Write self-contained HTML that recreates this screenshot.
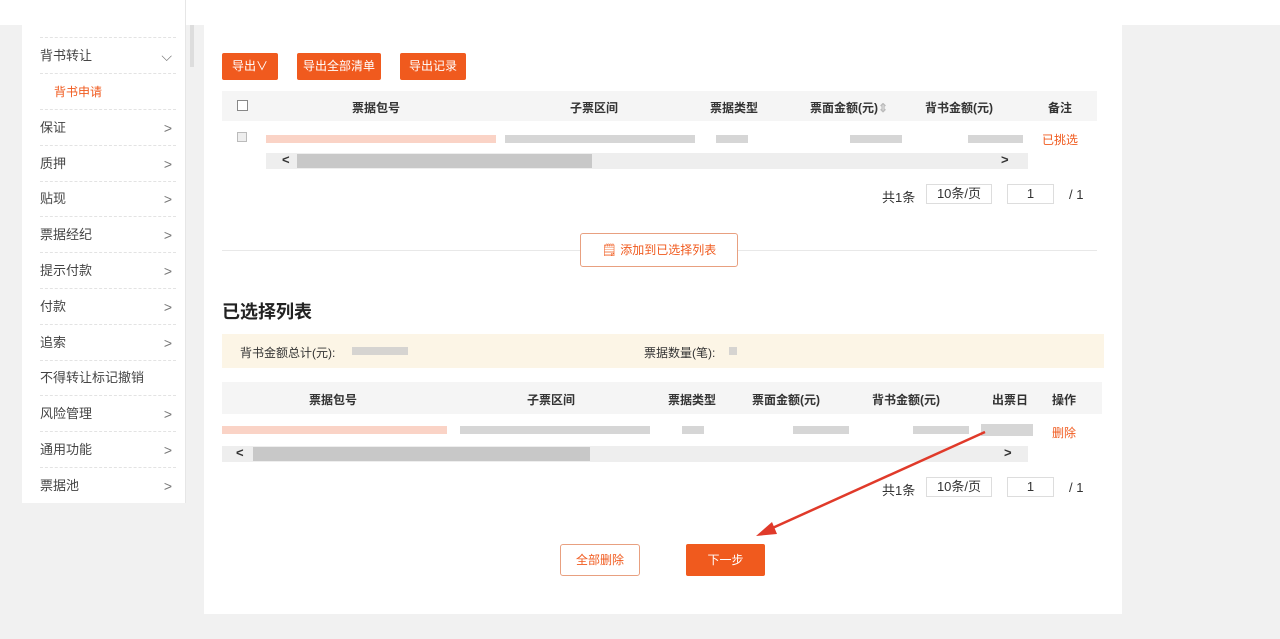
<!DOCTYPE html>
<html><head><meta charset="utf-8"><style>
*{margin:0;padding:0;box-sizing:border-box}
body{width:1280px;height:639px;background:#f1f1f1;font-family:"Liberation Sans","Noto Sans CJK SC",sans-serif;font-size:13px;color:#333;position:relative;overflow:hidden}
.a{position:absolute}
.side{left:22px;top:0;width:164px;height:503px;background:#fff;border-right:1px solid #e6e6e6}
.it{position:absolute;left:18px;width:136px;height:36px;line-height:36px;border-bottom:1px dashed #e3e3e3;font-size:13px;color:#444}
.it span{position:absolute;right:4px;color:#777;font-size:14px}
.main{left:204px;top:0;width:918px;height:614px;background:#fff}
.btn{position:absolute;background:#f05a1e;color:#fff;font-size:12px;text-align:center;line-height:27px;border-radius:2px;height:27px}
.th{position:absolute;font-weight:bold;font-size:12px;color:#333}
.blur{position:absolute;height:8px;background:#ccc;opacity:.8}
.pg{position:absolute;font-size:13px;color:#333}
.box{position:absolute;border:1px solid #ddd;height:20px;line-height:18px;text-align:center;font-size:13px}
</style></head><body>
<div class="a" style="left:0;top:0;width:1280px;height:25px;background:#fff"></div>
<div class="a side">
<div class="it" style="top:2px;height:36px"></div>
<div class="it" style="top:38px">背书转让<span>⌵</span></div>
<div class="it" style="top:74px;padding-left:14px;color:#f05a1e;font-size:12px">背书申请</div>
<div class="it" style="top:110px">保证<span>&gt;</span></div>
<div class="it" style="top:146px">质押<span>&gt;</span></div>
<div class="it" style="top:181px">贴现<span>&gt;</span></div>
<div class="it" style="top:217px">票据经纪<span>&gt;</span></div>
<div class="it" style="top:253px">提示付款<span>&gt;</span></div>
<div class="it" style="top:289px">付款<span>&gt;</span></div>
<div class="it" style="top:325px">追索<span>&gt;</span></div>
<div class="it" style="top:360px">不得转让标记撤销</div>
<div class="it" style="top:396px">风险管理<span>&gt;</span></div>
<div class="it" style="top:432px">通用功能<span>&gt;</span></div>
<div class="it" style="top:468px;border:none">票据池<span>&gt;</span></div>
</div>
<div class="a main"></div>
<div class="a" style="left:190px;top:25px;width:4px;height:42px;background:#ddd"></div>
<div class="btn" style="left:222px;top:53px;width:56px">导出∨</div>
<div class="btn" style="left:297px;top:53px;width:84px">导出全部清单</div>
<div class="btn" style="left:400px;top:53px;width:66px">导出记录</div>
<div class="a" style="left:222px;top:91px;width:875px;height:30px;background:#f5f5f5"></div>
<div class="a" style="left:237px;top:100px;width:11px;height:11px;border:1px solid #888;background:#fff"></div>
<div class="th" style="left:352px;top:99px">票据包号</div>
<div class="th" style="left:570px;top:99px">子票区间</div>
<div class="th" style="left:710px;top:99px">票据类型</div>
<div class="th" style="left:810px;top:99px">票面金额(元)<span style="color:#bbb">⇕</span></div>
<div class="th" style="left:925px;top:99px">背书金额(元)</div>
<div class="th" style="left:1048px;top:99px">备注</div>
<div class="a" style="left:237px;top:132px;width:10px;height:10px;border:1px solid #bbb;background:#eee"></div>
<div class="blur" style="left:266px;top:135px;width:230px;background:#f9c8b8"></div>
<div class="blur" style="left:505px;top:135px;width:190px"></div>
<div class="blur" style="left:716px;top:135px;width:32px"></div>
<div class="blur" style="left:850px;top:135px;width:52px"></div>
<div class="blur" style="left:968px;top:135px;width:55px"></div>
<div class="a" style="left:1042px;top:131px;color:#f05a1e;font-size:12px">已挑选</div>
<div class="a" style="left:266px;top:153px;width:762px;height:16px;background:#eee"></div>
<div class="a" style="left:297px;top:154px;width:295px;height:14px;background:#c8c8c8"></div>
<div class="a" style="left:282px;top:152px;font-size:13px;font-weight:bold">&lt;</div>
<div class="a" style="left:1001px;top:152px;font-size:13px;font-weight:bold">&gt;</div>
<div class="pg" style="left:882px;top:187px">共1条</div>
<div class="box" style="left:926px;top:184px;width:66px">10条/页</div>
<div class="box" style="left:1007px;top:184px;width:47px">1</div>
<div class="pg" style="left:1069px;top:187px">/ 1</div>
<div class="a" style="left:222px;top:250px;width:875px;height:1px;background:#e8e8e8"></div>
<div class="a" style="left:580px;top:233px;width:158px;height:34px;background:#fff;border:1px solid #e8a080;border-radius:3px;color:#f05a1e;font-size:12px;line-height:32px;text-align:center">🗒 添加到已选择列表</div>
<div class="a" style="left:222px;top:298px;font-size:18px;font-weight:bold;color:#222">已选择列表</div>
<div class="a" style="left:222px;top:334px;width:882px;height:34px;background:#fcf5e6"></div>
<div class="a" style="left:240px;top:344px;font-size:12px">背书金额总计(元):</div>
<div class="blur" style="left:352px;top:347px;width:56px"></div>
<div class="a" style="left:644px;top:344px;font-size:12px">票据数量(笔):</div>
<div class="blur" style="left:729px;top:347px;width:8px"></div>
<div class="a" style="left:222px;top:382px;width:880px;height:32px;background:#f5f5f5"></div>
<div class="th" style="left:309px;top:391px">票据包号</div>
<div class="th" style="left:527px;top:391px">子票区间</div>
<div class="th" style="left:668px;top:391px">票据类型</div>
<div class="th" style="left:752px;top:391px">票面金额(元)</div>
<div class="th" style="left:872px;top:391px">背书金额(元)</div>
<div class="th" style="left:992px;top:391px">出票日</div>
<div class="th" style="left:1052px;top:391px">操作</div>
<div class="blur" style="left:222px;top:426px;width:225px;background:#f9c8b8"></div>
<div class="blur" style="left:460px;top:426px;width:190px"></div>
<div class="blur" style="left:682px;top:426px;width:22px"></div>
<div class="blur" style="left:793px;top:426px;width:56px"></div>
<div class="blur" style="left:913px;top:426px;width:56px"></div>
<div class="blur" style="left:981px;top:424px;width:52px;height:12px"></div>
<div class="a" style="left:1052px;top:424px;color:#f05a1e;font-size:12px">删除</div>
<div class="a" style="left:222px;top:446px;width:806px;height:16px;background:#eee"></div>
<div class="a" style="left:253px;top:447px;width:337px;height:14px;background:#c8c8c8"></div>
<div class="a" style="left:236px;top:445px;font-size:13px;font-weight:bold">&lt;</div>
<div class="a" style="left:1004px;top:445px;font-size:13px;font-weight:bold">&gt;</div>
<div class="pg" style="left:882px;top:480px">共1条</div>
<div class="box" style="left:926px;top:477px;width:66px">10条/页</div>
<div class="box" style="left:1007px;top:477px;width:47px">1</div>
<div class="pg" style="left:1069px;top:480px">/ 1</div>
<div class="a" style="left:560px;top:544px;width:80px;height:32px;border:1px solid #e8a080;border-radius:3px;color:#f05a1e;font-size:12px;line-height:30px;text-align:center;background:#fff">全部删除</div>
<div class="a" style="left:686px;top:544px;width:79px;height:32px;background:#f05a1e;border-radius:2px;color:#fff;font-size:12px;line-height:32px;text-align:center">下一步</div>
<svg class="a" style="left:0;top:0" width="1280" height="639"><line x1="985" y1="432" x2="768" y2="530" stroke="#e03a2a" stroke-width="2.5"/><polygon points="756,536 772,522 777,534" fill="#e03a2a"/></svg>
</body></html>
